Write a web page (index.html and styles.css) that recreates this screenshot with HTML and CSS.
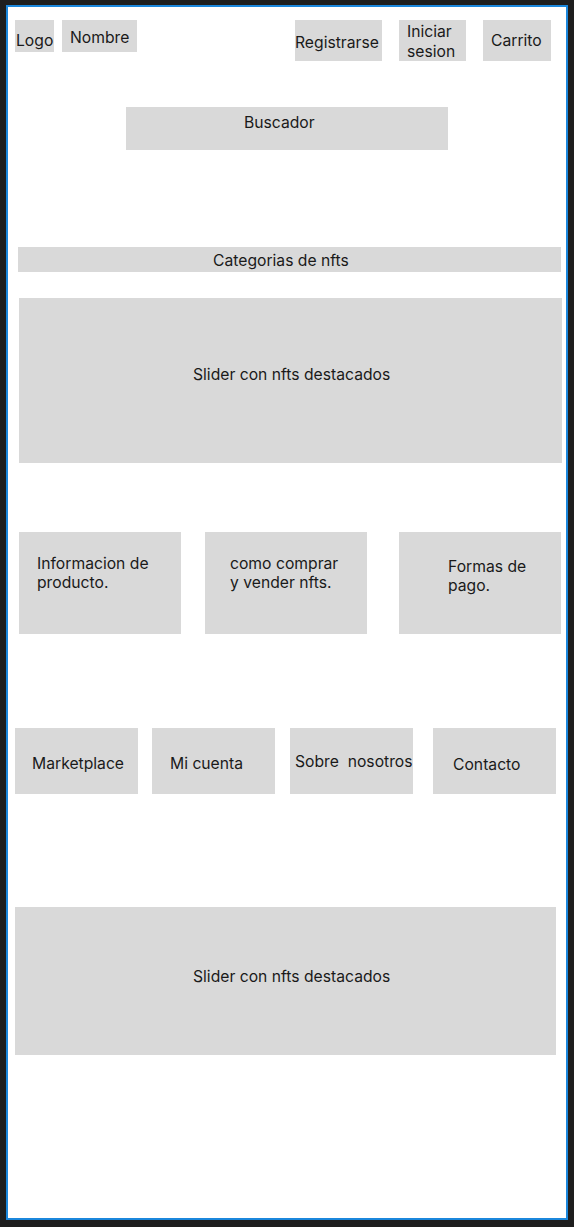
FILE: index.html
```html
<!DOCTYPE html>
<html lang="es">
<head>
<meta charset="utf-8"/>
<meta content="width=device-width, initial-scale=1" name="viewport"/>
<title>Wireframe NFT</title>
<link rel="stylesheet" href="styles.css">
</head>
<body>
<div class="frame">
  <header class="top">
    <div class="top-left">
      <div class="box logo">Logo</div>
      <div class="box name">Nombre</div>
    </div>
    <div class="top-right">
      <div class="box btn btn-register">Registrarse</div>
      <div class="box btn btn-login">Iniciar<br>sesion</div>
      <div class="box btn btn-cart">Carrito</div>
    </div>
  </header>

  <div class="box search">Buscador</div>

  <div class="box categories">Categorias de nfts</div>

  <div class="box slider slider-top">Slider con nfts destacados</div>

  <section class="info-row">
    <div class="box info info-product">Informacion de<br>producto.</div>
    <div class="box info info-howto">como comprar<br>y vender nfts.</div>
    <div class="box info info-pay">Formas de<br>pago.</div>
  </section>

  <nav class="nav-row">
    <div class="box nav nav-market">Marketplace</div>
    <div class="box nav nav-account">Mi cuenta</div>
    <div class="box nav nav-about">Sobre  nosotros</div>
    <div class="box nav nav-contact">Contacto</div>
  </nav>

  <div class="box slider slider-bottom">Slider con nfts destacados</div>
</div>
</body>
</html>
```

FILE: styles.css
```css
body {
  margin: 0;
  background: #1e1e1e;
  padding: 5px 6px 7px 6px;
  font-family: 'Inter', 'Liberation Sans', sans-serif;
  font-size: 15.7px;
  line-height: 18px;
  color: #1a1a1a;
}
.frame {
  background: #fff;
  border: 2px solid #1b87dc;
  height: 1211px;
  box-sizing: content-box;
}
.box {
  background: #d9d9d9;
  box-sizing: border-box;
}

/* header */
.top {
  display: flex;
  justify-content: space-between;
  align-items: flex-start;
  padding: 13px 15px 0 7px;
}
.top-left, .top-right {
  display: flex;
  align-items: flex-start;
}
.top-left {
  gap: 8px;
}
.top-right {
  gap: 17px;
}
.logo {
  width: 39px;
  height: 32px;
  padding: 12px 0 0 1px;
}
.name {
  width: 75px;
  height: 32px;
  padding: 9px 0 0 8px;
}
.btn {
  height: 41px;
}
.btn-register {
  width: 87px;
  padding: 14px 0 0 0;
}
.btn-login {
  width: 67px;
  padding: 2px 0 0 8px;
  line-height: 20px;
}
.btn-cart {
  width: 68px;
  padding: 12px 0 0 8px;
}

/* search + categories */
.search {
  width: 322px;
  height: 43px;
  margin: 46px 0 0 118px;
  padding: 7px 0 0 118px;
}
.categories {
  width: 543px;
  height: 25px;
  margin: 97px 0 0 10px;
  padding: 5px 0 0 195px;
}

/* sliders */
.slider-top {
  width: 543px;
  height: 165px;
  margin: 26px 0 0 11px;
  padding: 68px 0 0 174px;
}
.slider-bottom {
  width: 541px;
  height: 148px;
  margin: 113px 0 0 7px;
  padding: 61px 0 0 178px;
}

/* info boxes */
.info-row {
  display: flex;
  margin: 69px 0 0 11px;
}
.info {
  width: 162px;
  height: 102px;
  line-height: 19px;
  padding-top: 22px;
}
.info-product {
  padding-left: 18px;
}
.info-howto {
  margin-left: 24px;
  padding-left: 25px;
}
.info-pay {
  margin-left: 32px;
  padding-left: 49px;
  padding-top: 25px;
}

/* nav boxes */
.nav-row {
  display: flex;
  margin: 94px 0 0 7px;
}
.nav {
  width: 123px;
  height: 66px;
  padding-top: 27px;
  white-space: pre;
}
.nav-market {
  padding-left: 17px;
}
.nav-account {
  margin-left: 14px;
  padding-left: 18px;
}
.nav-about {
  margin-left: 15px;
  padding-left: 5px;
  padding-top: 25px;
}
.nav-contact {
  margin-left: 20px;
  padding-left: 20px;
  padding-top: 28px;
}
```
